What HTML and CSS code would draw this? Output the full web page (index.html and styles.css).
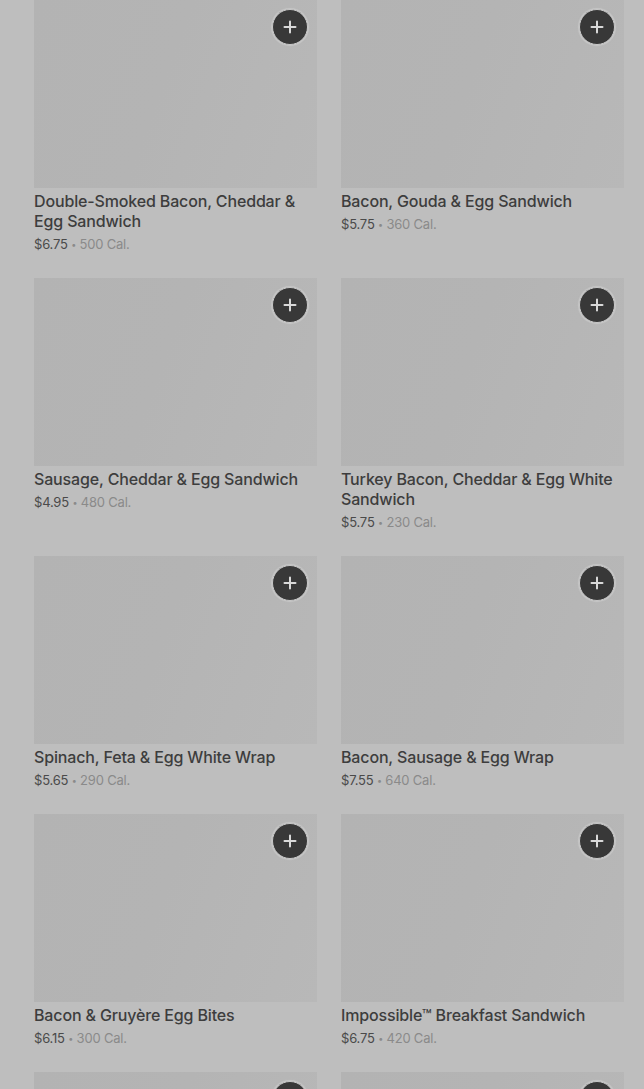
FILE: index.html
```html
<!DOCTYPE html>
<html lang="en">
<head>
<meta charset="utf-8">
<title>Menu</title>
<link rel="stylesheet" href="styles.css">
</head>
<body>
<main class="grid">
  <article class="card">
    <div class="thumb"><button class="add" aria-label="Add"><svg viewBox="0 0 14 14" width="14" height="14"><path d="M7 1.5v11M1.5 7h11" stroke="currentColor" stroke-width="2" stroke-linecap="round"/></svg></button></div>
    <h3 class="name">Double-Smoked Bacon, Cheddar &amp; Egg Sandwich</h3>
    <p class="meta"><span class="price">$6.75</span> <span class="dot">•</span> <span class="cal">500 Cal.</span></p>
  </article>
  <article class="card">
    <div class="thumb"><button class="add" aria-label="Add"><svg viewBox="0 0 14 14" width="14" height="14"><path d="M7 1.5v11M1.5 7h11" stroke="currentColor" stroke-width="2" stroke-linecap="round"/></svg></button></div>
    <h3 class="name">Bacon, Gouda &amp; Egg Sandwich</h3>
    <p class="meta"><span class="price">$5.75</span> <span class="dot">•</span> <span class="cal">360 Cal.</span></p>
  </article>
  <article class="card">
    <div class="thumb"><button class="add" aria-label="Add"><svg viewBox="0 0 14 14" width="14" height="14"><path d="M7 1.5v11M1.5 7h11" stroke="currentColor" stroke-width="2" stroke-linecap="round"/></svg></button></div>
    <h3 class="name">Sausage, Cheddar &amp; Egg Sandwich</h3>
    <p class="meta"><span class="price">$4.95</span> <span class="dot">•</span> <span class="cal">480 Cal.</span></p>
  </article>
  <article class="card">
    <div class="thumb"><button class="add" aria-label="Add"><svg viewBox="0 0 14 14" width="14" height="14"><path d="M7 1.5v11M1.5 7h11" stroke="currentColor" stroke-width="2" stroke-linecap="round"/></svg></button></div>
    <h3 class="name">Turkey Bacon, Cheddar &amp; Egg White Sandwich</h3>
    <p class="meta"><span class="price">$5.75</span> <span class="dot">•</span> <span class="cal">230 Cal.</span></p>
  </article>
  <article class="card">
    <div class="thumb"><button class="add" aria-label="Add"><svg viewBox="0 0 14 14" width="14" height="14"><path d="M7 1.5v11M1.5 7h11" stroke="currentColor" stroke-width="2" stroke-linecap="round"/></svg></button></div>
    <h3 class="name">Spinach, Feta &amp; Egg White Wrap</h3>
    <p class="meta"><span class="price">$5.65</span> <span class="dot">•</span> <span class="cal">290 Cal.</span></p>
  </article>
  <article class="card">
    <div class="thumb"><button class="add" aria-label="Add"><svg viewBox="0 0 14 14" width="14" height="14"><path d="M7 1.5v11M1.5 7h11" stroke="currentColor" stroke-width="2" stroke-linecap="round"/></svg></button></div>
    <h3 class="name">Bacon, Sausage &amp; Egg Wrap</h3>
    <p class="meta"><span class="price">$7.55</span> <span class="dot">•</span> <span class="cal">640 Cal.</span></p>
  </article>
  <article class="card">
    <div class="thumb"><button class="add" aria-label="Add"><svg viewBox="0 0 14 14" width="14" height="14"><path d="M7 1.5v11M1.5 7h11" stroke="currentColor" stroke-width="2" stroke-linecap="round"/></svg></button></div>
    <h3 class="name">Bacon &amp; Gruyère Egg Bites</h3>
    <p class="meta"><span class="price">$6.15</span> <span class="dot">•</span> <span class="cal">300 Cal.</span></p>
  </article>
  <article class="card">
    <div class="thumb"><button class="add" aria-label="Add"><svg viewBox="0 0 14 14" width="14" height="14"><path d="M7 1.5v11M1.5 7h11" stroke="currentColor" stroke-width="2" stroke-linecap="round"/></svg></button></div>
    <h3 class="name">Impossible™ Breakfast Sandwich</h3>
    <p class="meta"><span class="price">$6.75</span> <span class="dot">•</span> <span class="cal">420 Cal.</span></p>
  </article>
  <article class="card">
    <div class="thumb"><button class="add" aria-label="Add"><svg viewBox="0 0 14 14" width="14" height="14"><path d="M7 1.5v11M1.5 7h11" stroke="currentColor" stroke-width="2" stroke-linecap="round"/></svg></button></div>
  </article>
  <article class="card">
    <div class="thumb"><button class="add" aria-label="Add"><svg viewBox="0 0 14 14" width="14" height="14"><path d="M7 1.5v11M1.5 7h11" stroke="currentColor" stroke-width="2" stroke-linecap="round"/></svg></button></div>
  </article>
</main>
</body>
</html>
```

FILE: styles.css
```css
html, body {
  margin: 0;
  padding: 0;
  overflow: hidden;
  height: 100%;
}

body {
  background: #bebebe;
  font-family: Inter, "Liberation Sans", sans-serif;
}

.grid {
  display: grid;
  grid-template-columns: 283px 283px;
  column-gap: 24px;
  row-gap: 25px;
  padding: 0 20px 0 34px;
  align-items: start;
}

.card {
  display: flex;
  flex-direction: column;
}

.thumb {
  position: relative;
  height: 188px;
  background: linear-gradient(110deg, #b3b3b3 0%, #b4b4b4 45%, #b8b8b8 100%);
}

.add {
  position: absolute;
  top: 9px;
  right: 9px;
  width: 36px;
  height: 36px;
  border-radius: 50%;
  border: 1px solid #c9c9c9;
  background: #383838;
  color: #d9d9d9;
  display: flex;
  align-items: center;
  justify-content: center;
  padding: 0;
  box-shadow: 0 0 1px 1px rgba(210, 210, 210, 0.6);
}

.add svg {
  display: block;
}

.name {
  margin: 3px 0 0;
  font-size: 16px;
  line-height: 20px;
  font-weight: 500;
  color: #3d3d3d;
  letter-spacing: -0.15px;
}

.meta {
  margin: 4px 0 0;
  height: 18px;
  font-size: 13px;
  line-height: 18px;
  letter-spacing: -0.2px;
}

.price {
  color: #4a4a4a;
}

.dot {
  color: #8a8a8a;
  font-size: 9px;
  line-height: 0;
  vertical-align: 1px;
}

.cal {
  color: #8a8a8a;
}
```
